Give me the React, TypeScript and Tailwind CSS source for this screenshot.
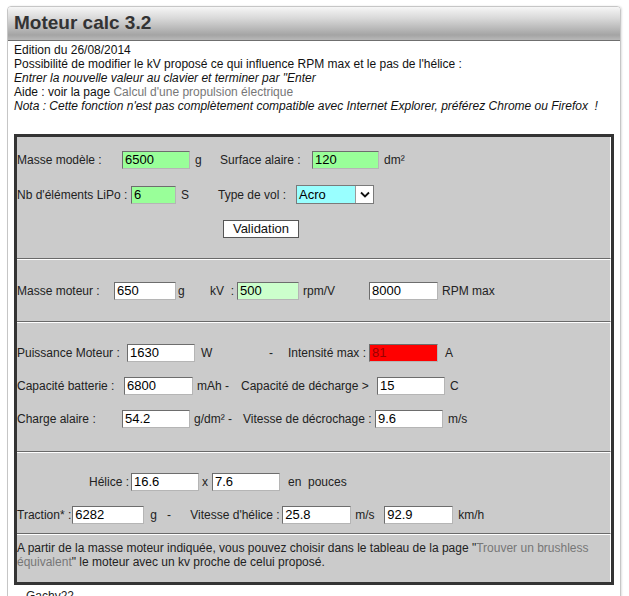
import React from "react";

const font = "font-['Liberation_Sans',Arial,sans-serif]";

function Box({
  w,
  value,
  bg = "bg-white",
  color = "text-black",
}: {
  w: string;
  value: string;
  bg?: string;
  color?: string;
}) {
  return (
    <div
      className={`${w} ${bg} ${color} h-[18px] shrink-0 border border-t-[#6d6d6d] border-l-[#6d6d6d] border-r-[#b5b5b5] border-b-[#b5b5b5] pl-[2px] text-[13px] leading-[16px]`}
    >
      {value}
    </div>
  );
}

function Txt({ w, children, extra = "" }: { w?: string; children: React.ReactNode; extra?: string }) {
  return <span className={`${w ?? ""} shrink-0 whitespace-pre text-[12px] text-[#222] ${extra}`}>{children}</span>;
}

export default function App() {
  return (
    <div className={`${font} min-h-[596px] bg-white pl-[7px] pt-[6px]`}>
      <div className="w-[614px] rounded-t-[4px] border border-[#c6c6c6] shadow-[1px_0_2px_rgba(0,0,0,0.12)]">
        {/* Title bar */}
        <div className="flex h-[34px] items-center rounded-t-[3px] border-b border-[#6f6f6f] bg-[linear-gradient(to_bottom,#f6f6f6_0%,#d8d8d8_35%,#a4a4a4_85%,#b8b8b8_100%)] pl-[6px]">
          <h1 className="text-[19px] font-bold text-[#333]">Moteur calc 3.2</h1>
        </div>

        {/* Intro */}
        <div className="px-[6px] pt-[2px] text-[12px] leading-[14px] text-[#111]">
          <p>Edition du 26/08/2014</p>
          <p>Possibilité de modifier le kV proposé ce qui influence RPM max et le pas de l'hélice :</p>
          <p className="italic">Entrer la nouvelle valeur au clavier et terminer par "Enter</p>
          <p>
            Aide : voir la page <span className="text-[#777]">Calcul d'une propulsion électrique</span>
          </p>
          <p className="italic">
            Nota : Cette fonction n'est pas complètement compatible avec Internet Explorer, préférez Chrome ou Firefox&nbsp; !
          </p>
        </div>

        {/* Form table */}
        <div className="mx-[6px] mt-[21px] w-[600px] border-[3px] border-[#343434] bg-[#cbcbcb]">
          {/* Section 1 */}
          <div className="flex h-[122px] flex-col gap-[16px] border-b border-[#6a6a6a] border-r border-r-white pt-[14px]">
            <div className="flex items-center">
              <Txt w="w-[105px]">Masse modèle :</Txt>
              <Box w="w-[68px]" value="6500" bg="bg-[#99ff99]" />
              <Txt w="w-[30px]" extra="pl-[5px]">g</Txt>
              <Txt w="w-[92px]">Surface alaire :</Txt>
              <Box w="w-[67px]" value="120" bg="bg-[#99ff99]" />
              <Txt extra="pl-[5px]">dm²</Txt>
            </div>
            <div className="flex items-center">
              <Txt w="w-[114px]">Nb d'éléments LiPo :</Txt>
              <Box w="w-[45px]" value="6" bg="bg-[#99ff99]" />
              <Txt w="w-[42px]" extra="pl-[5px]">S</Txt>
              <Txt w="w-[78px]">Type de vol :</Txt>
              <div className="flex h-[19px] w-[78px] border border-[#7a7a7a] bg-[#99ffff]">
                <span className="flex-1 pl-[2px] text-[13px] leading-[17px]">Acro</span>
                <span className="flex w-[18px] items-center justify-center border-l border-[#9a9a9a] bg-white">
                  <svg width="10" height="7" viewBox="0 0 10 7">
                    <path d="M1 1.5 L5 5.5 L9 1.5" fill="none" stroke="#111" strokeWidth="1.8" />
                  </svg>
                </span>
              </div>
            </div>
            <div className="flex">
              <button className="ml-[206px] h-[18px] w-[76px] border border-[#555] bg-white text-[13px] leading-[16px] text-[#111]">
                Validation
              </button>
            </div>
          </div>

          {/* Section 2 */}
          <div className="flex h-[63px] items-center border-b border-t border-b-[#6a6a6a] border-t-white border-r border-r-white">
            <Txt w="w-[97px]">Masse moteur :</Txt>
            <Box w="w-[62px]" value="650" />
            <Txt w="w-[34px]" extra="pl-[2px]">g</Txt>
            <Txt w="w-[27px]">kV&nbsp; :</Txt>
            <Box w="w-[62px]" value="500" bg="bg-[#ccffcc]" />
            <Txt w="w-[70px]" extra="pl-[4px]">rpm/V</Txt>
            <Box w="w-[69px]" value="8000" />
            <Txt extra="pl-[4px]">RPM max</Txt>
          </div>

          {/* Section 3 */}
          <div className="flex h-[130px] flex-col gap-[15px] border-b border-t border-b-[#6a6a6a] border-t-white border-r border-r-white pt-[21px]">
            <div className="flex items-center">
              <Txt w="w-[110px]">Puissance Moteur :</Txt>
              <Box w="w-[68px]" value="1630" />
              <Txt w="w-[74px]" extra="pl-[6px]">W</Txt>
              <Txt w="w-[19px]">-</Txt>
              <Txt w="w-[81px]">Intensité max :</Txt>
              <Box w="w-[69px]" value="81" bg="bg-[#ff0000]" color="text-[#9a0000]" />
              <Txt extra="pl-[7px]">A</Txt>
            </div>
            <div className="flex items-center">
              <Txt w="w-[107px]">Capacité batterie :</Txt>
              <Box w="w-[69px]" value="6800" />
              <Txt w="w-[48px]" extra="pl-[4px]">mAh -</Txt>
              <Txt w="w-[136px]">Capacité de décharge &gt;</Txt>
              <Box w="w-[68px]" value="15" />
              <Txt extra="pl-[5px]">C</Txt>
            </div>
            <div className="flex items-center">
              <Txt w="w-[105px]">Charge alaire :</Txt>
              <Box w="w-[68px]" value="54.2" />
              <Txt w="w-[53px]" extra="pl-[4px]">g/dm² -</Txt>
              <Txt w="w-[132px]">Vitesse de décrochage :</Txt>
              <Box w="w-[68px]" value="9.6" />
              <Txt extra="pl-[5px]">m/s</Txt>
            </div>
          </div>

          {/* Section 4 */}
          <div className="flex h-[82px] flex-col gap-[15px] border-b border-t border-b-[#6a6a6a] border-t-white border-r border-r-white pt-[20px]">
            <div className="flex items-center">
              <Txt w="w-[114px]" extra="pr-[2px] text-right">Hélice :</Txt>
              <Box w="w-[68px]" value="16.6" />
              <Txt w="w-[13px]" extra="pl-[3px]">x</Txt>
              <Box w="w-[68px]" value="7.6" />
              <Txt extra="pl-[8px]">en&nbsp; pouces</Txt>
            </div>
            <div className="flex items-center">
              <Txt extra="pr-[1px]">Traction* :</Txt>
              <Box w="w-[72px]" value="6282" />
              <Txt w="w-[46px]" extra="pl-[6px]">g&nbsp;&nbsp; -</Txt>
              <Txt w="w-[92px]">Vitesse d'hélice :</Txt>
              <Box w="w-[69px]" value="25.8" />
              <Txt w="w-[33px]" extra="pl-[4px]">m/s</Txt>
              <Box w="w-[69px]" value="92.9" />
              <Txt extra="pl-[5px]">km/h</Txt>
            </div>
          </div>

          {/* Section 5 */}
          <div className="h-[48px] border-t border-t-white border-r border-r-white pr-[4px] pt-[6px] text-[12px] leading-[14px] text-[#222]">
            A partir de la masse moteur indiquée, vous pouvez choisir dans le tableau de la page "<span className="text-[#777]">Trouver un brushless équivalent</span>" le moteur avec un kv proche de celui proposé.
          </div>
        </div>

        <p className="pl-[18px] pt-[4px] text-[12px] leading-[14px] text-[#222]">Gachy22</p>
      </div>
    </div>
  );
}
